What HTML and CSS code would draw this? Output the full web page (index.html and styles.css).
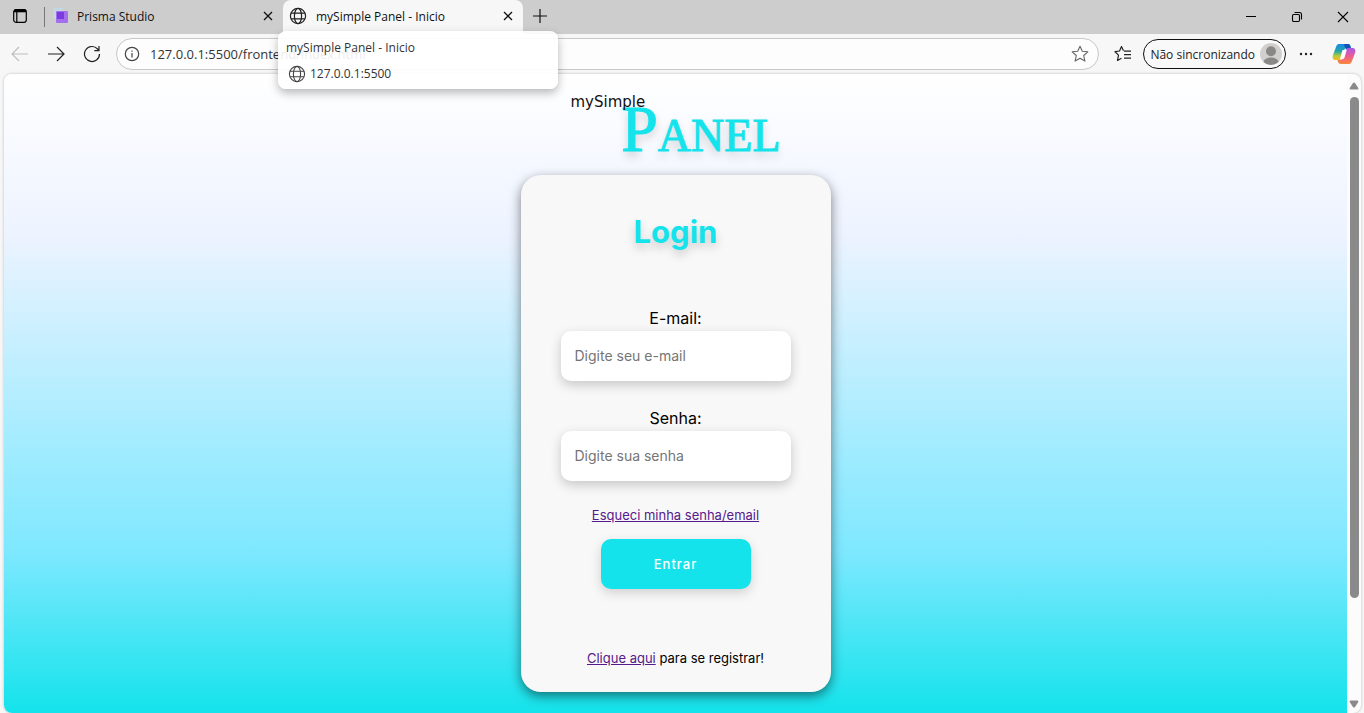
FILE: index.html
```html
<!DOCTYPE html>
<html lang="pt-BR">
<head>
<meta charset="utf-8">
<title>mySimple Panel - Inicio</title>
<link rel="stylesheet" href="styles.css">
</head>
<body class="browser">
<header class="tabbar">
  <button class="icon-button workspace" aria-label="Menu de guias">
    <svg width="16" height="16" viewBox="0 0 16 16" fill="none" stroke="#000" stroke-width="1.2"><rect x="1.700" y="1.700" width="12.600" height="12.600" rx="2.200"/><path d="M2 3h12" stroke-width="2.600"/><path d="M4.800 4v10"/></svg>
  </button>
  <div class="tab tab-first">
    <svg width="16" height="16" viewBox="0 0 16 16"><rect x="0" y="0" width="10" height="11" fill="#c3d6e2"/><rect x="3" y="3" width="12" height="12" rx="1" fill="#a56eee"/><rect x="4" y="4" width="7" height="7" fill="#7a3bdc"/></svg>
    <span class="tab-title">Prisma Studio</span>
    <button class="icon-button" aria-label="Fechar guia"><svg width="10" height="10" viewBox="0 0 10 10" fill="none" stroke="#111" stroke-width="1.3"><path d="M1 1l8 8M9 1l-8 8"/></svg></button>
  </div>
  <div class="tab tab-active">
    <svg width="18" height="18" viewBox="0 0 18 18" fill="none" stroke="#222" stroke-width="1.2"><circle cx="9" cy="9" r="7.6"/><ellipse cx="9" cy="9" rx="3.6" ry="7.6"/><path d="M2 6.2h14M2 11.8h14"/></svg>
    <span class="tab-title">mySimple Panel - Inicio</span>
    <button class="icon-button" aria-label="Fechar guia"><svg width="10" height="10" viewBox="0 0 10 10" fill="none" stroke="#111" stroke-width="1.3"><path d="M1 1l8 8M9 1l-8 8"/></svg></button>
    <div class="tooltip" role="tooltip">
      <span class="tooltip-title">mySimple Panel - Inicio</span>
      <span class="tooltip-site">
        <svg width="18" height="18" viewBox="0 0 18 18" fill="none" stroke="#444" stroke-width="1.1"><circle cx="9" cy="9" r="7.6"/><ellipse cx="9" cy="9" rx="3.6" ry="7.6"/><path d="M2 6.2h14M2 11.8h14"/></svg>
        127.0.0.1:5500
      </span>
    </div>
  </div>
  <button class="icon-button new-tab" aria-label="Nova guia"><svg width="14" height="14" viewBox="0 0 14 14" stroke="#111" stroke-width="1.2"><path d="M7 0v14M0 7h14"/></svg></button>
  <div class="window-controls">
    <button class="icon-button" aria-label="Minimizar"><svg width="12" height="12" viewBox="0 0 12 12" stroke="#000"><path d="M1 5.5h10"/></svg></button>
    <button class="icon-button" aria-label="Restaurar"><svg width="12" height="12" viewBox="0 0 12 12" fill="none" stroke="#000" stroke-width="1.1"><rect x="1.5" y="3.5" width="7" height="7" rx="1.2"/><path d="M3.5 1.5H8.500a2 2 0 0 1 2 2V8.500"/></svg></button>
    <button class="icon-button" aria-label="Fechar"><svg width="12" height="12" viewBox="0 0 12 12" stroke="#000" stroke-width="1.1"><path d="M1 1l10 10M11 1L1 11"/></svg></button>
  </div>
</header>
<nav class="toolbar">
  <div class="nav-buttons">
    <button class="icon-button" aria-label="Voltar"><svg width="18" height="16" viewBox="0 0 18 16" fill="none" stroke="#bdbdbd" stroke-width="1.1"><path d="M17 8H1.500M8 1L1 8l7 7"/></svg></button>
    <button class="icon-button" aria-label="Avançar"><svg width="18" height="16" viewBox="0 0 18 16" fill="none" stroke="#222" stroke-width="1.2"><path d="M1 8h15.500M10 1l7 7-7 7"/></svg></button>
    <button class="icon-button" aria-label="Atualizar"><svg width="18" height="18" viewBox="0 0 18 18" fill="none" stroke="#222" stroke-width="1.2"><path d="M16.500 9A7.500 7.500 0 1 1 14.600 4L16 5.500M16 1v4.700h-4.700"/></svg></button>
  </div>
  <div class="address">
    <svg width="16" height="16" viewBox="0 0 16 16" fill="none" stroke="#444" stroke-width="1.2"><circle cx="8" cy="8" r="6.700"/><path d="M8 7v4.500M8 4.500v1.300"/></svg>
    <input class="address-input" aria-label="Endereço" value="127.0.0.1:5500/frontend/index.html">
    <button class="icon-button" aria-label="Favoritar"><svg width="18" height="18" viewBox="0 0 18 18" fill="none" stroke="#666" stroke-width="1.1" stroke-linejoin="round"><path d="M9 1.200l2.300 5 5.500.600-4.100 3.700 1.200 5.600L9 13.300l-4.900 2.800 1.200-5.600L1.200 6.800l5.500-.600z"/></svg></button>
  </div>
  <button class="icon-button favorites" aria-label="Favoritos"><svg width="18" height="18" viewBox="0 0 18 18" fill="none" stroke="#222" stroke-width="1.200" stroke-linejoin="round"><path d="M9.500 5.700L7.500 1.500 5.500 6l-4.500.7 3.500 3.400-1 5.400 4-2.300M10 6.200h7M10 9.700h7M10 13.200h7"/></svg></button>
  <button class="profile">Não sincronizando
    <svg width="22" height="22" viewBox="0 0 22 22"><circle cx="11" cy="11" r="11" fill="#d2d0ce"/><circle cx="11" cy="8.300" r="5" fill="#8a8886"/><path d="M3.500 19c1-6 14-6 15 0a11 11 0 0 1-15 0z" fill="#8a8886"/></svg>
  </button>
  <button class="icon-button more" aria-label="Mais"><svg width="14" height="4" viewBox="0 0 14 4" fill="#222"><circle cx="2" cy="2" r="1.200"/><circle cx="7" cy="2" r="1.200"/><circle cx="12" cy="2" r="1.200"/></svg></button>
  <button class="icon-button copilot" aria-label="Copilot">
    <svg width="24" height="22" viewBox="0 0 24 22">
      <defs>
        <linearGradient id="cold" x1="0" y1="0" x2="0" y2="1"><stop offset="0" stop-color="#1688e8"/><stop offset=".45" stop-color="#22a6a8"/><stop offset=".75" stop-color="#b9cc38"/><stop offset="1" stop-color="#f5b820"/></linearGradient>
        <linearGradient id="warm" x1="0" y1="0" x2="0" y2="1"><stop offset="0" stop-color="#a65be8"/><stop offset=".5" stop-color="#ec5b92"/><stop offset="1" stop-color="#fa8838"/></linearGradient>
      </defs>
      <path d="M7 1h9c2 0 2.500 2 3 4h-4c-2 0-2.500 1-3 3l-2 6c-.500 2-1.500 3-3 3H4c-3 0-4-2-3-5l3-8c.700-2 1.500-3 3-3z" fill="url(#cold)"/>
      <path d="M12 1h4c2 0 2.500 2 3 5h-4c-1.500 0-2-1-3-5z" fill="#1450b8"/>
      <path d="M17 21H9c-2.500 0-3-2-3.500-4H8c2 0 3-1 3.500-3l2-6c.500-2 1.500-3 3-3H20c3 0 4 2 3 5l-3 8c-.700 2-1.500 3-3 3z" fill="url(#warm)"/>
      <path d="M10.500 7h4.200l-2 7c-.500 1.500-1.200 2-2 2H8z" fill="#fff"/>
    </svg>
  </button>
</nav>
<div class="viewport">
  <main class="page">
    <div class="logo"><span class="logo-small">mySimple</span><span class="logo-large">Panel</span></div>
    <form class="card">
      <h1 class="card-title">Login</h1>
      <div class="field">
        <label for="email">E-mail:</label>
        <input class="text-box" id="email" type="email" placeholder="Digite seu e-mail">
      </div>
      <div class="field">
        <label for="senha">Senha:</label>
        <input class="text-box" id="senha" type="password" placeholder="Digite sua senha">
      </div>
      <a class="forgot" href="#">Esqueci minha senha/email</a>
      <button class="submit" type="submit">Entrar</button>
      <p class="register"><a href="#">Clique aqui</a> para se registrar!</p>
    </form>
  </main>
  <div class="scrollbar" aria-hidden="true">
    <svg width="10" height="8" viewBox="0 0 10 8" fill="#8a8a8a"><path d="M5 .5Q5.600.5 6 1L9.300 6Q9.700 7.500 8.500 7.500h-7Q.3 7.500.7 6L4 1Q4.400.5 5 .5z"/></svg>
    <div class="scroll-track"><div class="scroll-thumb"></div></div>
    <svg width="10" height="8" viewBox="0 0 10 8" fill="#8a8a8a"><path d="M5 7.500Q5.600 7.500 6 7L9.300 2Q9.700.5 8.500.5h-7Q.3.5.7 2L4 7Q4.400 7.500 5 7.500z"/></svg>
  </div>
</div>
</body>
</html>
```
FILE: styles.css
```css
* { box-sizing: border-box; }

body, h1, p { margin: 0; }

svg { display: block; flex: none; }

button, input { font: inherit; }

.browser {
  display: flex;
  flex-direction: column;
  min-height: 100vh;
  background: #f7f7f7;
  font-family: "Open Sans", "Noto Sans", sans-serif;
  font-size: 12px;
  color: #1a1a1a;
}

.icon-button {
  display: flex;
  padding: 0;
  border: 0;
  background: none;
}

.tabbar {
  display: flex;
  align-items: stretch;
  height: 34px;
  background: #cdcdcd;
}

.workspace { align-items: center; padding: 0 16px 2px 12px; }

.tab {
  position: relative;
  display: flex;
  align-items: center;
  width: 240px;
  padding: 0 10px 2px 6px;
  gap: 9px;
}

.tab-title { flex: 1; white-space: nowrap; color: #111; }

.tab-first { width: 239px; padding-left: 9px; gap: 8px; }

.tab-first::before {
  content: "";
  position: absolute;
  left: 0;
  top: 7px;
  width: 1px;
  height: 20px;
  background: #777;
}

.tab-active {
  border-radius: 8px 8px 0 0;
  background: #f7f7f7;
}

.tooltip {
  position: absolute;
  z-index: 2;
  top: 31px;
  left: -5px;
  display: flex;
  flex-direction: column;
  gap: 8px;
  width: 280px;
  padding: 8px 8px 6px;
  border-radius: 8px;
  background: rgba(255, 255, 255, 0.9);
  box-shadow: 0 4px 10px rgba(0, 0, 0, 0.28);
  line-height: 18px;
  color: #333;
}

.tooltip-site { display: flex; align-items: center; gap: 4px; padding-left: 2px; }

.new-tab { align-items: center; padding: 0 10px 2px; }

.window-controls {
  display: flex;
  align-items: center;
  gap: 34px;
  margin-left: auto;
  padding: 0 15px 0 0;
}

.toolbar {
  display: flex;
  align-items: center;
  height: 40px;
  padding: 0 8px 0 11px;
}

.nav-buttons { display: flex; align-items: center; gap: 18px; }

.address {
  flex: 1;
  display: flex;
  align-items: center;
  gap: 10px;
  height: 32px;
  margin-left: 15px;
  padding: 0 9px 0 7px;
  border: 1px solid #c8c8c8;
  border-radius: 16px;
  background: #fdfdfd;
}

.address-input {
  flex: 1;
  min-width: 0;
  padding: 0;
  border: 0;
  outline: 0;
  background: none;
  font-size: 13px;
  color: #333;
}

.favorites { margin: 0 11px 0 15px; }

.profile {
  display: flex;
  align-items: center;
  gap: 5px;
  height: 30px;
  padding: 0 3px 0 6px;
  border: 1px solid #111;
  border-radius: 15px;
  background: #f9f9f9;
  color: #222;
  white-space: nowrap;
}

.more { margin: 0 19px 0 13px; }

.viewport {
  flex: 1;
  display: flex;
  margin: 0 3px 0 4px;
  border-radius: 8px;
  overflow: hidden;
  background: #fcfcfc;
  box-shadow: 0 0 3px rgba(0, 0, 0, 0.25);
}

.page {
  flex: 1;
  display: flex;
  flex-direction: column;
  align-items: center;
  padding: 18px 0 21px;
  background: linear-gradient(#ffffff, #edf3ff 25%, #7de8ff 75%, #14e3eb);
  font-family: Inter, "Open Sans", sans-serif;
  color: #000;
}

.logo { display: flex; flex-direction: column; width: 210px; }

.logo-small {
  z-index: 1;
  font: 15px/20px "DejaVu Sans", sans-serif;
  color: #111;
}

.logo-large {
  align-self: flex-end;
  margin: -21px 0 8px;
  font: 66px/76px "Liberation Serif", serif;
  font-variant: small-caps;
  color: #14e3eb;
  -webkit-text-stroke: 1px #14e3eb;
  text-shadow: 0 5px 10px rgba(0, 0, 0, 0.2);
}

.card {
  display: flex;
  flex-direction: column;
  align-items: center;
  width: 310px;
  padding: 33px 40px 24px;
  border-radius: 20px;
  background: #f8f8f8;
  box-shadow: 0 4px 12px rgba(0, 0, 0, 0.5);
}

.card-title {
  margin-bottom: 24px;
  font-size: 31px;
  font-weight: 700;
  line-height: 48px;
  color: #14e3eb;
  text-shadow: 0 5px 10px rgba(0, 0, 0, 0.2);
}

.field {
  display: flex;
  flex-direction: column;
  align-items: center;
  align-self: stretch;
  margin-top: 25px;
  font-size: 16px;
  line-height: 24px;
}

.text-box {
  width: 100%;
  height: 50px;
  margin-top: 1px;
  padding: 0 14px 1px;
  border: 0;
  border-radius: 10px;
  background: #fff;
  box-shadow: 0 4px 12px rgba(0, 0, 0, 0.2);
  font-size: 14px;
}

.card-title + .field { margin-top: 26px; }

.text-box::placeholder { color: #757575; }

.card a { color: #551a8b; }

.forgot { margin-top: 24px; font-size: 13px; line-height: 20px; }

.submit {
  width: 150px;
  height: 50px;
  margin-top: 14px;
  border: 0;
  border-radius: 10px;
  background: #14e3eb;
  box-shadow: 0 4px 12px rgba(0, 0, 0, 0.16);
  font-size: 13px;
  font-weight: 500;
  letter-spacing: 1px;
  color: #fff;
}

.register { margin-top: 59px; font-size: 13px; line-height: 20px; white-space: nowrap; }

.scrollbar {
  display: flex;
  flex-direction: column;
  align-items: center;
  gap: 7px;
  width: 14px;
  padding: 8px 0 5px;
}

.scroll-track { flex: 1; width: 9px; }

.scroll-thumb { height: 84%; border-radius: 5px; background: #8a8a8a; }
```
